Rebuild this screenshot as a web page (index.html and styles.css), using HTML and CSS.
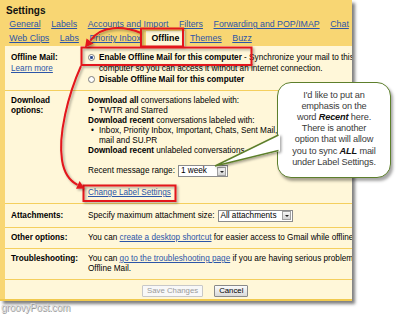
FILE: index.html
```html
<!DOCTYPE html>
<html>
<head>
<meta charset="utf-8">
<link rel="stylesheet" href="styles.css">
</head>
<body>
<div class="page">
  <div class="frame">
    <div class="head">
      <div class="title">Settings</div>
      <div class="tabs r1">
        <a class="tab">General</a><a class="tab">Labels</a><a class="tab">Accounts and Import</a><a class="tab">Filters</a><a class="tab">Forwarding and POP/IMAP</a><a class="tab">Chat</a>
      </div>
      <div class="tabs r2">
        <a class="tab">Web Clips</a><a class="tab">Labs</a><a class="tab">Priority Inbox</a><span class="tab sel">Offline</span><a class="tab">Themes</a><a class="tab">Buzz</a>
      </div>
    </div>
    <div class="content">
      <div class="row r-offline">
        <div class="lbl">Offline Mail:<br><a class="link norm">Learn more</a></div>
        <div class="val">
          <div class="line"><span class="radio on"></span><b>Enable Offline Mail for this computer</b> - Synchronize your mail to this computer so you can</div>
          <div class="line ind">computer so you can access it without an internet connection.</div>
          <div class="line"><span class="radio"></span><b>Disable Offline Mail for this computer</b></div>
        </div>
      </div>
      <div class="row r-dl">
        <div class="lbl">Download<br>options:</div>
        <div class="val">
          <div class="line"><b>Download all</b> conversations labeled with:</div>
          <div class="line bul"><span class="dot">•</span>TWTR and Starred</div>
          <div class="line"><b>Download recent</b> conversations labeled with:</div>
          <div class="line bul"><span class="dot">•</span>Inbox, Priority Inbox, Important, Chats, Sent Mail,</div>
          <div class="line ind">mail and SU.PR</div>
          <div class="line"><b>Download recent</b> unlabeled conversations</div>
          <div class="range">Recent message range:<span class="select w-week"><span class="opt">1 week</span><span class="dd"></span></span></div>
          <div class="line cls"><a class="link">Change Label Settings</a></div>
        </div>
      </div>
      <div class="row r-att">
        <div class="lbl">Attachments:</div>
        <div class="val flexv">Specify maximum attachment size:<span class="select w-att"><span class="opt">All attachments</span><span class="dd"></span></span></div>
      </div>
      <div class="row">
        <div class="lbl">Other options:</div>
        <div class="val"><div class="line">You can <a class="link">create a desktop shortcut</a> for easier access to Gmail while offline.</div></div>
      </div>
      <div class="row">
        <div class="lbl">Troubleshooting:</div>
        <div class="val">
          <div class="line">You can <a class="link">go to the troubleshooting page</a> if you are having serious problems with</div>
          <div class="line">Offline Mail.</div>
        </div>
      </div>
      <div class="row btns">
        <button class="btn off">Save Changes</button><button class="btn">Cancel</button>
      </div>
    </div>
  </div>
  <div class="wm">groovyPost.com</div>

  <div class="bubble">I'd like to put an<br>emphasis on the<br>word <b><i>Recent</i></b> here.<br>There is another<br>option that will allow<br>you to sync <b><i>ALL</i></b> mail<br>under Label Settings.</div>

  <svg class="ann" width="400" height="316" viewBox="0 0 400 316">
    <defs>
      <filter id="sh" x="-20%" y="-20%" width="140%" height="140%">
        <feDropShadow dx="1.5" dy="1.5" stdDeviation="0.9" flood-color="#000" flood-opacity="0.35"/>
      </filter>
    </defs>
    <g filter="url(#sh)" fill="none" stroke="#e3141b" stroke-width="2">
      <rect x="141" y="28.5" width="42" height="18"/>
      <rect x="81.5" y="47.5" width="170" height="17.5"/>
      <rect x="83.5" y="185.5" width="92" height="15.5"/>
      <path d="M141 33 C124 26 101 25 90.5 40.5"/>
      <path d="M81 66 C68 95 58 135 62 160 C64 173 70 181 77.5 184.8"/>
    </g>
    <g filter="url(#sh)" fill="#e3141b">
      <polygon points="85,47.5 93.5,43.5 86.5,38.5"/>
      <polygon points="84.5,188.5 76,188.8 79.6,181"/>
    </g>
    <g filter="url(#sh)">
      <path d="M280 134 L215 166 L280 151 Z" fill="#fff"/>
      <path d="M278.5 135 L215 166 L278.5 150.5" fill="none" stroke="#5d7f2c" stroke-width="1.4"/>
    </g>
  </svg>
</div>
</body>
</html>
```
FILE: styles.css
```css
body {
  margin: 0;
  background: #fff;
  font-family: "Liberation Sans", Arial, sans-serif;
  font-size: 8.2px;
  color: #000;
}
.page {
  position: relative;
  width: 400px;
  height: 316px;
  overflow: hidden;
}
.frame {
  width: 352px;
  background: #f8d673;
  border-bottom: 2px solid #f0c94f;
  box-sizing: border-box;
  box-shadow: 3px 3px 3px rgba(0, 0, 0, 0.5);
  overflow: hidden;
}
.head {
  height: 46px;
  box-sizing: border-box;
  padding: 5px 0 0 4px;
}
.title {
  font-weight: bold;
  font-size: 10px;
  line-height: 12px;
  padding-left: 2px;
  color: #111;
}
.tabs {
  display: flex;
  font-size: 8.8px;
  white-space: nowrap;
}
.tabs.r1 {
  height: 14px;
  line-height: 14px;
}
.tabs.r2 {
  height: 15px;
  line-height: 15px;
}
.tab {
  padding: 0 5.3px;
  color: #2c55a8;
  text-decoration: underline;
}
.tab.sel {
  background: #fff7d9;
  color: #000;
  font-weight: bold;
  text-decoration: none;
}
.content {
  margin-left: 5px;
  background: #fff7d9;
}
.row {
  display: flex;
  border-top: 1px solid #f4cf5e;
  padding: 5px 0 5px 6px;
  line-height: 10px;
}
.row.r-offline {
  border-top: 0;
  padding: 5.5px 0 5.5px 6px;
  line-height: 11px;
}
.lbl {
  width: 77px;
  flex: none;
  font-weight: bold;
  white-space: nowrap;
}
.val {
  white-space: nowrap;
}
.line {
  white-space: nowrap;
}
.ind {
  padding-left: 11px;
}
.bul {
  padding-left: 3px;
}
.dot {
  display: inline-block;
  width: 8px;
}
.link {
  color: #2c55a8;
  text-decoration: underline;
}
.link.norm {
  font-weight: normal;
}
.radio {
  display: inline-block;
  width: 7px;
  height: 7px;
  box-sizing: border-box;
  border: 1px solid #7c7c7c;
  border-radius: 50%;
  background: #fdfdfd;
  margin-right: 4px;
  vertical-align: -1px;
}
.radio.on {
  background: radial-gradient(circle, #2a3f73 0, #3d5da0 1.3px, #fdfdfd 1.8px);
}
.range {
  display: flex;
  align-items: center;
  height: 12px;
  margin-top: 9px;
}
.cls {
  margin-top: 11px;
  line-height: 10px;
}
.select {
  display: inline-flex;
  align-items: center;
  height: 12px;
  box-sizing: border-box;
  border: 1px solid #8c8c8c;
  background: #fff;
  padding: 0 1px 0 2px;
  margin-left: 3px;
}
.w-week {
  width: 50px;
}
.w-att {
  width: 75px;
}
.opt {
  flex: 1;
}
.dd {
  position: relative;
  width: 9px;
  height: 9px;
  box-sizing: border-box;
  border: 1px solid #a0a0a0;
  background: linear-gradient(#f6f6f6, #d4d4d4);
}
.dd::after {
  content: "";
  position: absolute;
  left: 2px;
  top: 3px;
  border-left: 2px solid transparent;
  border-right: 2px solid transparent;
  border-top: 2px solid #222;
}
.row.r-att {
  align-items: center;
  line-height: 13px;
}
.flexv {
  display: flex;
  align-items: center;
  height: 13px;
}
.row.btns {
  padding: 5px 0 2px 137px;
  gap: 11px;
}
.btn {
  font-family: "Liberation Sans", Arial, sans-serif;
  font-size: 7.8px;
  height: 12px;
  line-height: 10px;
  padding: 0 4px;
  margin: 0;
  border: 1px solid #8a8a8a;
  border-radius: 1px;
  background: linear-gradient(#fbfbfb, #d9d9d9);
  color: #000;
}
.btn.off {
  border-color: #c8c8c8;
  background: #f8f8f8;
  color: #9a9a9a;
}
.wm {
  margin-top: 1px;
  padding-left: 1px;
  font-size: 10px;
  line-height: 11px;
  color: #d6d6d6;
  text-shadow: 1px 1px 0 #9a9a9a;
  letter-spacing: -0.2px;
}
.bubble {
  position: absolute;
  left: 277px;
  top: 82px;
  width: 114px;
  height: 96px;
  box-sizing: border-box;
  border: 1.5px solid #5d7f2c;
  border-radius: 14px;
  background: #fff;
  box-shadow: 2px 3px 3px rgba(0, 0, 0, 0.35);
  text-align: center;
  font-size: 9.2px;
  line-height: 11.2px;
  letter-spacing: -0.15px;
  color: #3a3a3a;
  padding-top: 6.5px;
}
.bubble b {
  color: #111;
}
.ann {
  position: absolute;
  left: 0;
  top: 0;
  pointer-events: none;
}
```
